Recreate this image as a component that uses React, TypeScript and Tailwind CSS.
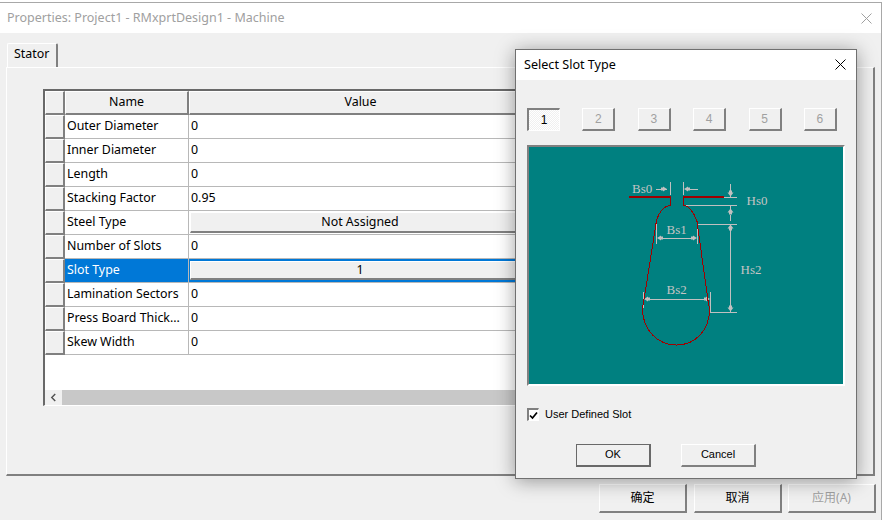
import React from "react";

const raised = "border-t border-l border-t-white border-l-white border-r-2 border-b-2 border-r-[#808080] border-b-[#808080]";

const rows: [string, string, boolean?][] = [
  ["Outer Diameter", "0"],
  ["Inner Diameter", "0"],
  ["Length", "0"],
  ["Stacking Factor", "0.95"],
  ["Steel Type", "Not Assigned", true],
  ["Number of Slots", "0"],
  ["Slot Type", "1", true],
  ["Lamination Sectors", "0"],
  ["Press Board Thick...", "0"],
  ["Skew Width", "0"],
];

function Row({ name, value, button }: { name: string; value: string; button?: boolean }) {
  const selected = name === "Slot Type";
  return (
    <div className="flex h-[24px] shrink-0">
      <div className={`w-[20px] bg-[#f0f0f0] ${raised}`} />
      <div className={`w-[124px] pl-[2px] flex items-center border-r border-b border-[#b8b8b8] ${selected ? "bg-[#0078d7] text-white" : "bg-white text-black"}`}>
        {name}
      </div>
      {button ? (
        <div className={`w-[344px] flex border-r border-b border-[#b8b8b8] px-px ${selected ? "bg-[#0078d7] py-[2px]" : "bg-white py-px"}`}>
          <div className={`flex-1 flex items-center justify-center bg-[#f0f0f0] ${raised}`}>{value}</div>
        </div>
      ) : (
        <div className="w-[344px] pl-[2px] flex items-center bg-white border-r border-b border-[#b8b8b8]">{value}</div>
      )}
    </div>
  );
}

function Head({ up, down }: { up?: [number, number]; down?: [number, number] }) {
  if (up) {
    const [x, y] = up;
    return <polygon points={`${x},${y} ${x + 3},${y + 4} ${x + 1.5},${y + 4} ${x + 1.5},${y + 6} ${x - 1.5},${y + 6} ${x - 1.5},${y + 4} ${x - 3},${y + 4}`} fill="#c0c0c0" />;
  }
  if (down) {
    const [x, y] = down;
    return <polygon points={`${x},${y} ${x + 3},${y - 4} ${x + 1.5},${y - 4} ${x + 1.5},${y - 6} ${x - 1.5},${y - 6} ${x - 1.5},${y - 4} ${x - 3},${y - 4}`} fill="#c0c0c0" />;
  }
  return null;
}

function HArrow({ x, y, dir }: { x: number; y: number; dir: 1 | -1 }) {
  return (
    <polygon
      points={`${x},${y} ${x - dir * 4},${y - 2.5} ${x - dir * 4},${y - 1.5} ${x - dir * 6},${y - 1.5} ${x - dir * 6},${y + 1.5} ${x - dir * 4},${y + 1.5} ${x - dir * 4},${y + 2.5}`}
      fill="#c0c0c0"
    />
  );
}

function SlotDiagram() {
  const g = "#c0c0c0";
  const r = "#a00000";
  const serif = { fontFamily: '"Liberation Serif", serif', fontSize: 13, fill: "#c4c4c4" };
  return (
    <svg viewBox="529 147 314 236" className="w-full h-full block">
      <g stroke={g} strokeWidth={1} fill="none" shapeRendering="crispEdges">
        <path d="M724 196.5H737M683 204.5H737M697.5 223.5H737M710 311.5H737" />
        <path d="M670.5 181V194M683.5 181V194M730.5 183V196M730.5 205V211M730.5 214V220M730.5 223V311" />
        <path d="M656 188.5H667M687 188.5H698" />
        <path d="M656.5 223V243M697.5 223V243M662 237.5H692" />
        <path d="M643.5 291V307M710.5 291V312M646 298.5H708" />
      </g>
      <HArrow x={667} y={188.5} dir={1} />
      <HArrow x={684} y={188.5} dir={-1} />
      <HArrow x={657} y={237.5} dir={-1} />
      <HArrow x={697} y={237.5} dir={1} />
      <HArrow x={644} y={298.5} dir={-1} />
      <HArrow x={710} y={298.5} dir={1} />
      <Head down={[730.5, 196]} />
      <Head up={[730.5, 208]} />
      <Head up={[730.5, 224]} />
      <Head down={[730.5, 311]} />
      <path
        d="M670.5 196V204.5C664 206 659 211 656.5 220L645 293L642.5 308C642.5 330 658 344.5 676.5 344.5C695 344.5 710 330 709.5 308L708 300L697 221C694 212 690 206 683.5 204.5V196"
        fill="none"
        stroke={r}
        strokeWidth={1}
        shapeRendering="crispEdges"
      />
      <path d="M629 196H671M683 196H724" fill="none" stroke={r} strokeWidth={2} shapeRendering="crispEdges" />
      <text x={632} y={192} style={serif}>Bs0</text>
      <text x={746.5} y={204} style={serif}>Hs0</text>
      <text x={666.5} y={233} style={serif}>Bs1</text>
      <text x={740.5} y={273} style={serif}>Hs2</text>
      <text x={666.5} y={293} style={serif}>Bs2</text>
    </svg>
  );
}

function SlotButton({ n, active }: { n: number; active?: boolean }) {
  return active ? (
    <div className="w-[33px] h-[23px] flex items-center justify-center text-black border-t-2 border-l-2 border-t-[#808080] border-l-[#808080] border-r border-b border-r-white border-b-white bg-[repeating-conic-gradient(#ffffff_0_25%,#f0f0f0_0_50%)] bg-[length:2px_2px]">
      {n}
    </div>
  ) : (
    <div className={`w-[33px] h-[23px] flex items-center justify-center text-[#a0a0a0] bg-[#f0f0f0] ${raised}`}>{n}</div>
  );
}

function X({ className, color }: { className: string; color: string }) {
  return (
    <svg viewBox="0 0 11 11" className={className} fill="none" stroke={color} strokeWidth={1}>
      <path d="M0.5 0.5L10.5 10.5M10.5 0.5L0.5 10.5" />
    </svg>
  );
}

function FootButton({ label, disabled }: { label: string; disabled?: boolean }) {
  return (
    <div className={`w-[88px] h-[29px] flex items-center justify-center bg-[#f0f0f0] ${raised} ${disabled ? "text-[#a0a0a0]" : "text-black"}`}>
      {label}
    </div>
  );
}

export default function App() {
  return (
    <div className="relative w-[883px] h-[520px] overflow-hidden bg-white text-[12.4px] leading-none text-black [font-family:'Noto_Sans','Noto_Sans_CJK_SC',sans-serif]">
      <div className="w-[882px] h-[520px] mt-[2px] flex flex-col border-t border-r border-[#a8a8a8] bg-[#f0f0f0]">
        <div className="h-[30px] shrink-0 bg-white flex items-center justify-between pl-[7px] pr-[9px] text-[#a0a0a0] text-[12.5px]">
          <span>Properties: Project1 - RMxprtDesign1 - Machine</span>
          <X className="w-[11px] h-[11px]" color="#a0a0a0" />
        </div>
        <div className="pt-[10px] pl-[7px] shrink-0 flex">
          <div className="w-[51px] h-[24px] flex items-center pl-[6px] pb-[2px] border-t border-l border-white border-r-2 border-r-[#808080] rounded-t-[2px]">Stator</div>
        </div>
        <div className="ml-[6px] w-[869px] h-[409px] shrink-0 border-t border-l border-white border-r-2 border-b-2 border-r-[#808080] border-b-[#808080] pt-[21px] pl-[36px]">
          <div className="w-[620px] h-[317px] flex flex-col border-t-2 border-l-2 border-[#696969] bg-white border-b border-b-white">
            <div className="flex h-[24px] shrink-0">
              <div className={`w-[20px] bg-[#f0f0f0] ${raised}`} />
              <div className={`w-[124px] flex items-center justify-center bg-[#f0f0f0] ${raised}`}>Name</div>
              <div className={`w-[344px] flex items-center justify-center bg-[#f0f0f0] ${raised}`}>Value</div>
              <div className="flex-1 bg-[#f0f0f0]" />
            </div>
            {rows.map(([n, v, b]) => (
              <Row key={n} name={n} value={v} button={b} />
            ))}
            <div className="flex-1" />
            <div className="h-[15px] shrink-0 flex bg-[#c8c8c8]">
              <div className="w-[17px] bg-[#f0f0f0] flex items-center justify-center">
                <svg viewBox="0 0 8 10" className="w-[7px] h-[9px]" fill="none" stroke="#505050" strokeWidth={1.6}>
                  <path d="M6 1L2 5L6 9" />
                </svg>
              </div>
            </div>
          </div>
        </div>
        <div className="pt-[8px] pr-[5px] flex justify-end gap-[6px] text-[12px] shrink-0">
          <div className="mr-[1px]">
            <FootButton label="确定" />
          </div>
          <FootButton label="取消" />
          <FootButton label="应用(A)" disabled />
        </div>
      </div>

      <div className="absolute left-[515px] top-[49px] w-[342px] h-[430px] flex flex-col bg-[#f0f0f0] border border-[#707070] shadow-[0_2px_18px_rgba(0,0,0,0.38)]">
        <div className="h-[30px] shrink-0 bg-white flex items-center justify-between pl-[8px] pr-[10px] text-[12.6px]">
          <span>Select Slot Type</span>
          <X className="w-[11px] h-[11px] mb-[2px]" color="#000000" />
        </div>
        <div className="flex-1 flex flex-col px-[11px] pt-[28px] text-[12px] [font-family:'Liberation_Sans',sans-serif]">
          <div className="flex justify-between w-[310px]">
            {[1, 2, 3, 4, 5, 6].map((n) => (
              <SlotButton key={n} n={n} active={n === 1} />
            ))}
          </div>
          <div className="mt-[14px] w-[318px] h-[241px] bg-[#008080] border-t-2 border-l-2 border-t-[#808080] border-l-[#808080] border-r-2 border-b-2 border-r-white border-b-white">
            <SlotDiagram />
          </div>
          <div className="mt-[22px] flex items-center gap-[6px] text-[11px]">
            <div className="w-[12px] h-[13px] bg-white border-t-2 border-l-2 border-t-[#808080] border-l-[#808080] border-r border-b border-r-white border-b-white flex items-center justify-center">
              <svg viewBox="0 0 9 9" className="w-[9px] h-[9px]" fill="none" stroke="#000" strokeWidth={1.7}>
                <path d="M1 4.5L3.5 7L8 1.5" />
              </svg>
            </div>
            <span>User Defined Slot</span>
          </div>
          <div className="mt-[23px] flex text-[11px] pl-[49px] gap-[30px]">
            <div className="w-[75px] h-[23px] pb-px flex items-center justify-center bg-[#f0f0f0] border-t border-l border-[#696969] border-r-2 border-b-2 border-r-[#696969] border-b-[#696969]">OK</div>
            <div className={`w-[75px] h-[23px] pb-px flex items-center justify-center bg-[#f0f0f0] ${raised}`}>Cancel</div>
          </div>
        </div>
      </div>
    </div>
  );
}
